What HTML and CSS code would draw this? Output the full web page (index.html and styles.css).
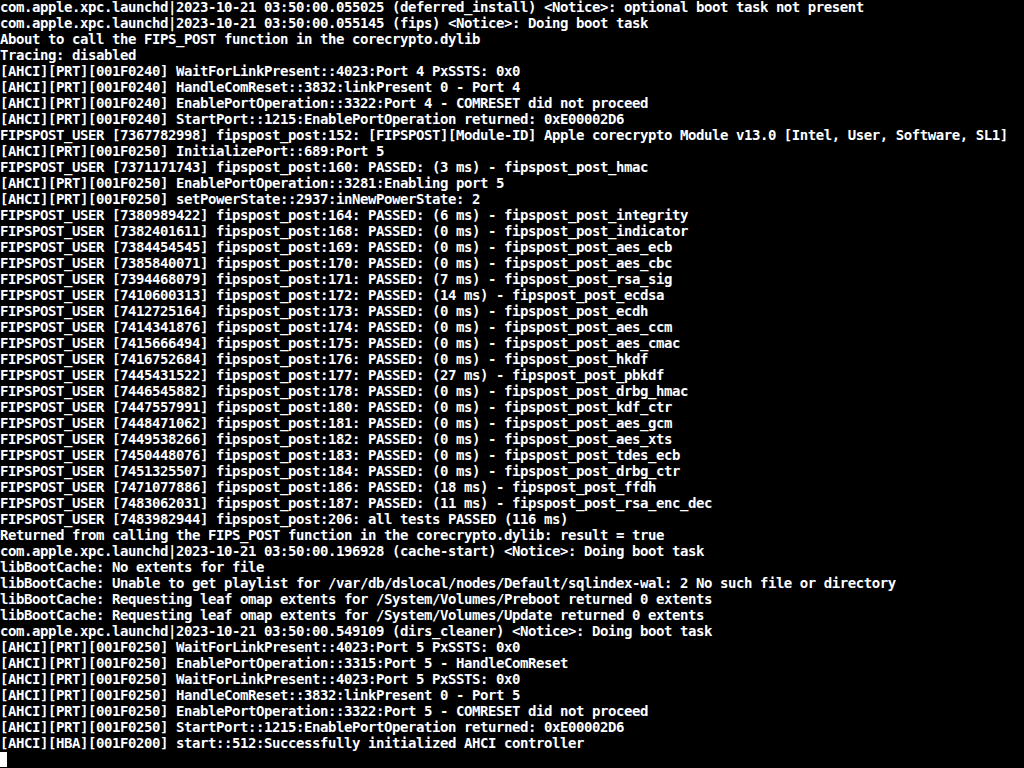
FILE: index.html
```html
<!DOCTYPE html>
<html>
<head>
<meta charset="utf-8">
<link rel="stylesheet" href="styles.css">
</head>
<body>
<pre class="console">com.apple.xpc.launchd|2023-10-21 03:50:00.055025 (deferred_install) &lt;Notice&gt;: optional boot task not present
com.apple.xpc.launchd|2023-10-21 03:50:00.055145 (fips) &lt;Notice&gt;: Doing boot task
About to call the FIPS_POST function in the corecrypto.dylib
Tracing: disabled
[AHCI][PRT][001F0240] WaitForLinkPresent::4023:Port 4 PxSSTS: 0x0
[AHCI][PRT][001F0240] HandleComReset::3832:linkPresent 0 - Port 4
[AHCI][PRT][001F0240] EnablePortOperation::3322:Port 4 - COMRESET did not proceed
[AHCI][PRT][001F0240] StartPort::1215:EnablePortOperation returned: 0xE00002D6
FIPSPOST_USER [7367782998] fipspost_post:152: [FIPSPOST][Module-ID] Apple corecrypto Module v13.0 [Intel, User, Software, SL1]
[AHCI][PRT][001F0250] InitializePort::689:Port 5
FIPSPOST_USER [7371171743] fipspost_post:160: PASSED: (3 ms) - fipspost_post_hmac
[AHCI][PRT][001F0250] EnablePortOperation::3281:Enabling port 5
[AHCI][PRT][001F0250] setPowerState::2937:inNewPowerState: 2
FIPSPOST_USER [7380989422] fipspost_post:164: PASSED: (6 ms) - fipspost_post_integrity
FIPSPOST_USER [7382401611] fipspost_post:168: PASSED: (0 ms) - fipspost_post_indicator
FIPSPOST_USER [7384454545] fipspost_post:169: PASSED: (0 ms) - fipspost_post_aes_ecb
FIPSPOST_USER [7385840071] fipspost_post:170: PASSED: (0 ms) - fipspost_post_aes_cbc
FIPSPOST_USER [7394468079] fipspost_post:171: PASSED: (7 ms) - fipspost_post_rsa_sig
FIPSPOST_USER [7410600313] fipspost_post:172: PASSED: (14 ms) - fipspost_post_ecdsa
FIPSPOST_USER [7412725164] fipspost_post:173: PASSED: (0 ms) - fipspost_post_ecdh
FIPSPOST_USER [7414341876] fipspost_post:174: PASSED: (0 ms) - fipspost_post_aes_ccm
FIPSPOST_USER [7415666494] fipspost_post:175: PASSED: (0 ms) - fipspost_post_aes_cmac
FIPSPOST_USER [7416752684] fipspost_post:176: PASSED: (0 ms) - fipspost_post_hkdf
FIPSPOST_USER [7445431522] fipspost_post:177: PASSED: (27 ms) - fipspost_post_pbkdf
FIPSPOST_USER [7446545882] fipspost_post:178: PASSED: (0 ms) - fipspost_post_drbg_hmac
FIPSPOST_USER [7447557991] fipspost_post:180: PASSED: (0 ms) - fipspost_post_kdf_ctr
FIPSPOST_USER [7448471062] fipspost_post:181: PASSED: (0 ms) - fipspost_post_aes_gcm
FIPSPOST_USER [7449538266] fipspost_post:182: PASSED: (0 ms) - fipspost_post_aes_xts
FIPSPOST_USER [7450448076] fipspost_post:183: PASSED: (0 ms) - fipspost_post_tdes_ecb
FIPSPOST_USER [7451325507] fipspost_post:184: PASSED: (0 ms) - fipspost_post_drbg_ctr
FIPSPOST_USER [7471077886] fipspost_post:186: PASSED: (18 ms) - fipspost_post_ffdh
FIPSPOST_USER [7483062031] fipspost_post:187: PASSED: (11 ms) - fipspost_post_rsa_enc_dec
FIPSPOST_USER [7483982944] fipspost_post:206: all tests PASSED (116 ms)
Returned from calling the FIPS_POST function in the corecrypto.dylib: result = true
com.apple.xpc.launchd|2023-10-21 03:50:00.196928 (cache-start) &lt;Notice&gt;: Doing boot task
libBootCache: No extents for file
libBootCache: Unable to get playlist for /var/db/dslocal/nodes/Default/sqlindex-wal: 2 No such file or directory
libBootCache: Requesting leaf omap extents for /System/Volumes/Preboot returned 0 extents
libBootCache: Requesting leaf omap extents for /System/Volumes/Update returned 0 extents
com.apple.xpc.launchd|2023-10-21 03:50:00.549109 (dirs_cleaner) &lt;Notice&gt;: Doing boot task
[AHCI][PRT][001F0250] WaitForLinkPresent::4023:Port 5 PxSSTS: 0x0
[AHCI][PRT][001F0250] EnablePortOperation::3315:Port 5 - HandleComReset
[AHCI][PRT][001F0250] WaitForLinkPresent::4023:Port 5 PxSSTS: 0x0
[AHCI][PRT][001F0250] HandleComReset::3832:linkPresent 0 - Port 5
[AHCI][PRT][001F0250] EnablePortOperation::3322:Port 5 - COMRESET did not proceed
[AHCI][PRT][001F0250] StartPort::1215:EnablePortOperation returned: 0xE00002D6
[AHCI][HBA][001F0200] start::512:Successfully initialized AHCI controller
<span class="cursor"></span></pre>
</body>
</html>
```
FILE: styles.css
```css
html, body {
  margin: 0;
  padding: 0;
  background: #000;
  overflow: hidden;
}

.console {
  margin: -1px 0 0 0;
  padding: 0;
  color: #fff;
  font-family: "DejaVu Sans Mono", "Liberation Mono", monospace;
  font-weight: bold;
  font-size: 14px;
  letter-spacing: -0.43px;
  line-height: 16px;
  white-space: pre;
}

.cursor {
  display: inline-block;
  width: 7px;
  height: 15px;
  background: #fff;
  vertical-align: top;
  margin-top: 1px;
}
```
